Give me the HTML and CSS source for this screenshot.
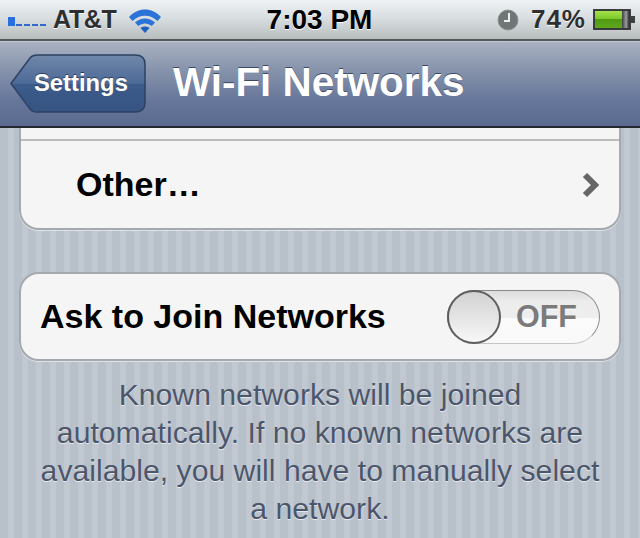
FILE: index.html
```
<!DOCTYPE html>
<html lang="en">
<head>
<meta charset="utf-8">
<title>Wi-Fi Networks</title>
<link rel="stylesheet" href="styles.css">
</head>
<body>
<div class="screen">
  <header class="status">
    <div class="status-left">
      <svg class="signal" width="40" height="12" viewBox="0 0 40 12"><rect x="0" y="2" width="7" height="9" fill="#2a6fe0"/><rect x="8" y="9" width="6" height="2" fill="#2f68c8"/><rect x="16" y="9" width="6" height="2" fill="#2f68c8"/><rect x="24" y="9" width="6" height="2" fill="#2f68c8"/><rect x="32" y="9" width="6" height="2" fill="#2f68c8"/></svg>
      <span class="carrier">AT&amp;T</span>
      <svg class="wifi" width="34" height="27" viewBox="0 0 34 27"><path d="M1 10 C10 0 24 0 33 10 L29.500 14 C22 7 12 7 4.500 14 Z" fill="#2b73d8"/><path d="M7 15.500 C13 10 21 10 27 15.500 L23.800 19 C19.500 15.500 14.500 15.500 10.200 19 Z" fill="#2b73d8"/><path d="M12.500 21 C15 19 19 19 21.500 21 L17 26 Z" fill="#1f5fc0"/></svg>
    </div>
    <div class="clock">7:03 PM</div>
    <div class="status-right">
      <svg class="alarm" width="22" height="22" viewBox="0 0 22 22"><circle cx="11" cy="11" r="10" fill="#6f7675" stroke="#8d9291" stroke-width="1"/><path d="M12 4 V12 H7" fill="none" stroke="#eef0ef" stroke-width="2"/></svg>
      <span class="percent">74%</span>
      <svg class="battery" width="42" height="22" viewBox="0 0 42 22">
        <defs>
          <linearGradient id="batgreen" x1="0" y1="0" x2="0" y2="1"><stop offset="0" stop-color="#a6e24a"/><stop offset="0.45" stop-color="#7cc82a"/><stop offset="0.5" stop-color="#4f9a12"/><stop offset="1" stop-color="#5fa81c"/></linearGradient>
          <linearGradient id="batrest" x1="0" y1="0" x2="1" y2="0"><stop offset="0" stop-color="#3a3c3e"/><stop offset="0.6" stop-color="#9a9c9e"/><stop offset="1" stop-color="#2e3032"/></linearGradient>
        </defs>
        <rect x="0.500" y="0.500" width="37" height="20" fill="#34383a" stroke="#3b3f40"/><rect x="2" y="2" width="27" height="17" fill="url(#batgreen)"/><rect x="29" y="2" width="7" height="17" fill="url(#batrest)"/><rect x="38" y="7" width="4" height="7" fill="#3b3f40"/></svg>
    </div>
  </header>
  <nav class="navbar">
    <a class="back">
      <svg class="back-shape" width="136" height="60" viewBox="0 0 136 60">
        <defs><linearGradient id="backfill" x1="0" y1="0" x2="0" y2="1"><stop offset="0" stop-color="#6f87aa"/><stop offset="0.5" stop-color="#4d6a96"/><stop offset="0.51" stop-color="#3d5c8b"/><stop offset="1" stop-color="#365382"/></linearGradient></defs>
        <path d="M1 29.500 L20 4 Q22.500 1 27 1 H125 Q135 1 135 10 V49 Q135 58 125 58 H27 Q22.500 58 20 55 Z" fill="url(#backfill)" stroke="#2e4262" stroke-width="1.500"/>
      </svg>
      <span class="back-label">Settings</span>
    </a>
    <h1 class="title">Wi-Fi Networks</h1>
  </nav>
  <main class="content">
    <section class="card card-top">
      <div class="row-stub"></div>
      <div class="row row-other">
        <span class="other-label">Other…</span>
        <svg class="chevron" width="18" height="26" viewBox="0 0 18 26"><path d="M3 3 L13 13 L3 23" fill="none" stroke="#666" stroke-width="6"/></svg>
      </div>
    </section>
    <section class="card card-join">
      <span class="join-label">Ask to Join Networks</span>
      <div class="switch">
        <span class="knob"></span>
        <span class="off">OFF</span>
      </div>
    </section>
    <p class="note">Known networks will be joined<br>automatically. If no known networks are<br>available, you will have to manually select<br>a network.</p>
  </main>
</div>
</body>
</html>
```

FILE: styles.css
```
* { box-sizing: border-box; }
html, body { margin: 0; padding: 0; }
body { width: 640px; height: 538px; overflow: hidden; font-family: "Liberation Sans", Arial, sans-serif; }
.screen { width: 640px; height: 538px; display: flex; flex-direction: column; overflow: hidden; }

.status {
  height: 41px; flex: none; display: grid; grid-template-columns: 1fr auto 1fr; align-items: center;
  background: linear-gradient(#eef2f5, #d9dee1 45%, #b9bdbe);
  border-bottom: 2px solid #54585c;
  padding: 0 5px 0 8px;
}
.status-left { display: flex; align-items: center; }
.signal { margin-top: 3px; margin-right: 5px; }
.carrier { font-size: 25px; font-weight: 700; color: #2d2f31; text-shadow: 0 1px 0 #fff; letter-spacing: -0.3px; }
.wifi { margin-left: 11px; margin-top: 1px; }
.clock { font-size: 28px; font-weight: 700; color: #000; text-shadow: 0 1px 0 #fff; margin-right: 4px; }
.status-right { display: flex; align-items: center; justify-content: flex-end; }
.alarm { margin-right: 12px; }
.percent { font-size: 26px; font-weight: 700; color: #2d2f31; text-shadow: 0 1px 0 #fff; letter-spacing: 1px; margin-right: 7px; }

.navbar {
  height: 87px; flex: none; display: flex; align-items: center;
  padding: 0 0 0 10px;
  background: linear-gradient(#aab2c2, #8996ad 30%, #66769a 70%, #5a6b8f);
  border-top: 1px solid #c3c9d3;
  border-bottom: 2px solid #23272e;
}
.back { position: relative; display: flex; align-items: center; width: 136px; height: 60px; }
.back-shape { position: absolute; left: 0; top: 0; }
.back-label { position: relative; margin-left: 24px; margin-bottom: 3px; font-size: 23.800px; font-weight: 700; color: #fff; text-shadow: 0 -1px 0 #2c3e5c; }
.title { margin: 0 0 4px 27px; font-size: 40.400px; font-weight: 700; color: #fff; text-shadow: 0 -1px 0 #3c4a66; }

.content {
  flex: 1; padding: 0 19px; overflow: hidden;
  background-color: #b9c1cb;
  background-image: repeating-linear-gradient(90deg, #b8c0ca 0, #b8c0ca 8px, #c1c8d1 8px, #c1c8d1 14px);
}
.card { background: #f5f5f5; border: 2px solid #a4a9b0; box-shadow: 0 1px 0 #dfe3e8; }
.card-top { height: 102px; border-top: 0; border-radius: 0 0 20px 20px; }
.row-stub { height: 13px; border-bottom: 2px solid #bcbcbc; }
.row-other { height: 87px; display: flex; align-items: center; justify-content: space-between; padding: 0 19px 0 55px; }
.other-label { font-size: 34px; font-weight: 700; color: #000; }
.chevron { flex: none; }
.card-join {
  margin-top: 42px; height: 89px; border-radius: 20px;
  display: flex; align-items: center; justify-content: space-between; padding: 0 19px;
}
.join-label { font-size: 34px; font-weight: 700; color: #000; }
.switch {
  position: relative; width: 153px; height: 54px; border-radius: 27px; flex: none;
  border: 1px solid #8a8a8a; border-bottom-color: #c4c4c4;
  background: linear-gradient(#dcdcdc, #ececec 20%, #eeeeee 52%, #fbfbfb 53%, #f9f9f9);
  display: flex; align-items: center; justify-content: flex-end; padding-right: 22px;
}
.knob {
  position: absolute; left: -1px; top: -1px; width: 54px; height: 54px; border-radius: 50%;
  border: 2px solid #5e5e5e;
  background: linear-gradient(#d2d2d2, #f7f7f7);
}
.off { font-size: 30.500px; font-weight: 700; color: #7b7b7b; text-shadow: 0 1px 0 #fff; }
.note {
  margin: 15px -10px 0; text-align: center;
  font-size: 30.200px; line-height: 38px; color: #4c566b; text-shadow: 0 1px 0 #e6eaee;
}
```
